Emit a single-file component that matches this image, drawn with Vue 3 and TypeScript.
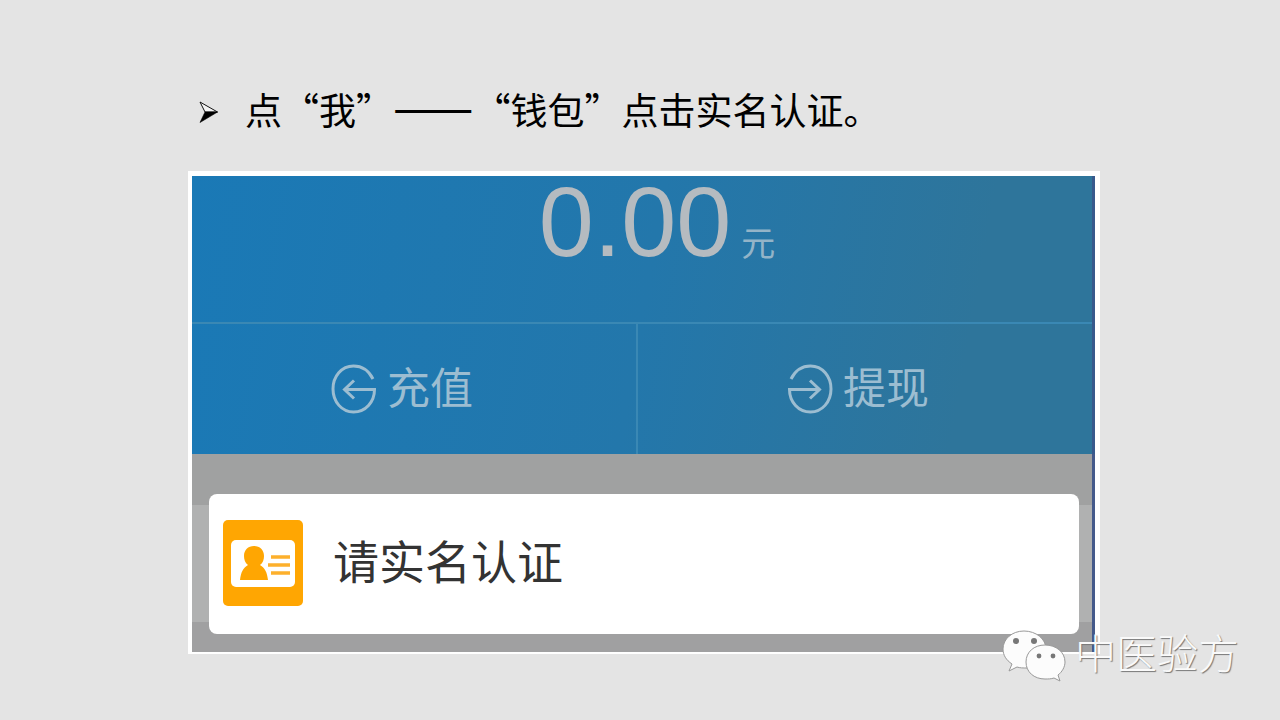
<script setup lang="ts">
interface WalletAction {
  id: string
  label: string
}

const actions: WalletAction[] = [
  { id: 'topup', label: '充值' },
  { id: 'withdraw', label: '提现' },
]
const balance = '0.00'
</script>

<template>
  <main class="slide">
    <h1 class="title">
      <svg class="bullet" viewBox="0 -6 20 28" aria-hidden="true">
        <path d="M1 1 L18.500 11 L6 11 Z" fill="#f4f4f4" stroke="#111" stroke-width="1" />
        <path d="M6 11 L18.500 11 L1 21.500 Z" fill="#000" stroke="#000" stroke-width="0.6" />
      </svg>
      <span>点“我”<span class="dash">——</span>“钱包”点击实名认证。</span>
    </h1>

    <section class="frame">
      <div class="wallet">
        <div class="balance">
          <span class="amount">{{ balance }}</span>
          <span class="unit">元</span>
        </div>
        <div class="actions">
          <button v-for="action in actions" :key="action.id" type="button" class="action">
            <svg v-if="action.id === 'topup'" class="action-icon" viewBox="0 0 46 50" aria-hidden="true">
              <path d="M42 15 C38 7 31 2 22.500 2 C10.500 2 2 12.500 2 25 C2 38 11 48 22.500 48 C34.500 48 43.500 38 43.500 25.500 L14 25.500 M23 16.500 L13.500 25.500 L23 34.500" />
            </svg>
            <svg v-else class="action-icon" viewBox="0 0 46 50" aria-hidden="true">
              <path d="M4 15 C8 7 15 2 23.500 2 C35.500 2 44 12.500 44 25 C44 38 35 48 23.500 48 C11.500 48 2.500 38 2.500 25.500 L31 25.500 M23 16.500 L32.500 25.500 L23 34.500" />
            </svg>
            <span>{{ action.label }}</span>
          </button>
        </div>
      </div>

      <div class="lower">
        <button type="button" class="card">
          <svg class="id-icon" viewBox="0 0 80 86" aria-hidden="true">
            <rect width="80" height="86" rx="5" fill="#ffa602" />
            <rect x="8" y="20" width="64" height="47" rx="5" fill="#fff" />
            <path d="M17 60 C18 52 20 48 25 45 C22 43 21 39 21 36 C21 30 25 26 31 26 C37 26 41 30 41 36 C41 39 40 43 37 45 C42 48 44 52 45 60 Z" fill="#ffa602" />
            <path d="M48 37 H67 M45 45 H67 M48 53 H67" stroke="#fdb02c" stroke-width="3.600" />
          </svg>
          <span>请实名认证</span>
        </button>
      </div>
    </section>

    <div class="watermark">
      <svg class="wechat" viewBox="0 0 66 54" aria-hidden="true">
        <g class="bubbles">
          <path d="M22 1 C10 1 1 9 1 19 C1 25 4 30 10 34 L7 41 L15 37 C18 38 21 38 25 38 C36 38 44 30 44 19 C44 9 34 1 22 1 Z" />
          <path d="M43 15 C32 15 24 22 24 32 C24 42 32 49 43 49 C46 49 49 49 52 48 L58 51 L56 45 C60 42 63 37 63 32 C63 22 54 15 43 15 Z" />
        </g>
        <g fill="#777">
          <circle cx="14" cy="11" r="3" />
          <circle cx="32" cy="11" r="3" />
          <circle cx="37" cy="26" r="2.400" />
          <circle cx="51" cy="26" r="2.400" />
        </g>
      </svg>
      <span>中医验方</span>
    </div>
  </main>
</template>

<style>
body {
  margin: 0;
  background: #e4e4e4;
}
</style>

<style scoped>
.slide {
  position: relative;
  box-sizing: border-box;
  min-height: 100vh;
  padding: 80px 180px 64px 188px;
  background: #e4e4e4;
  font-family: "Liberation Sans", "Noto Sans CJK SC", sans-serif;
}

.title {
  display: flex;
  align-items: center;
  gap: 26px;
  margin: 0 0 34px;
  padding-left: 11px;
  font-family: "Noto Sans CJK SC", sans-serif;
  font-size: 37px;
  font-weight: 400;
  line-height: 56px;
  color: #000;
  white-space: nowrap;
}

.bullet {
  width: 20px;
  height: 28px;
}

.dash {
  font-size: 48px;
  line-height: 1;
}

.frame {
  border: solid #fff;
  border-width: 5px 5px 2px 4px;
}

.wallet {
  border-right: 3px solid #38598c;
  background: linear-gradient(100deg, #1a79b6 0%, #2377ab 50%, #2e759b 85%, #2e759b 100%);
}

.balance {
  display: flex;
  justify-content: center;
  align-items: baseline;
  gap: 10px;
  height: 146px;
  padding-left: 30px;
  color: #b5bbc0;
}

.amount {
  font-size: 99px;
  line-height: 92px;
}

.unit {
  font-size: 34px;
  line-height: 40px;
  color: #93b4c8;
}

.actions {
  display: grid;
  grid-template-columns: 444px 1fr;
  border-top: 2px solid #3a88b4;
}

.action {
  display: flex;
  justify-content: center;
  align-items: center;
  gap: 10px;
  height: 130px;
  padding: 0 24px 0 0;
  border: 0;
  background: none;
  font: inherit;
  font-size: 43px;
  line-height: 56px;
  color: #9cbdd1;
}

.action + .action {
  padding-right: 14px;
  border-left: 2px solid #3a88b4;
}

.action-icon {
  width: 46px;
  height: 50px;
  fill: none;
  stroke: #9cbdd1;
  stroke-width: 3;
}

.lower {
  padding: 40px 13px 18px 17px;
  border-right: 3px solid #44598a;
  background: linear-gradient(#a0a1a1 0 51px, #b0b1b1 51px 168px, #a0a0a1 168px);
}

.card {
  display: flex;
  align-items: center;
  gap: 30px;
  width: 100%;
  height: 140px;
  padding: 0 14px 3px;
  border: 0;
  border-radius: 8px;
  background: #fff;
  font: inherit;
  font-size: 46px;
  line-height: 60px;
  color: #333;
}

.id-icon {
  width: 80px;
  height: 86px;
}

.watermark {
  position: absolute;
  right: 41px;
  bottom: 36px;
  display: flex;
  align-items: flex-start;
  gap: 7px;
  font-family: "Noto Sans CJK SC", sans-serif;
  font-size: 41px;
  font-weight: 300;
  line-height: 42px;
  color: #fafafa;
  text-shadow: 1px 1px 1px #777;
}

.wechat {
  width: 66px;
  height: 54px;
}

.bubbles {
  fill: #fcfcfc;
  stroke: #999;
  stroke-width: 1;
}
</style>
